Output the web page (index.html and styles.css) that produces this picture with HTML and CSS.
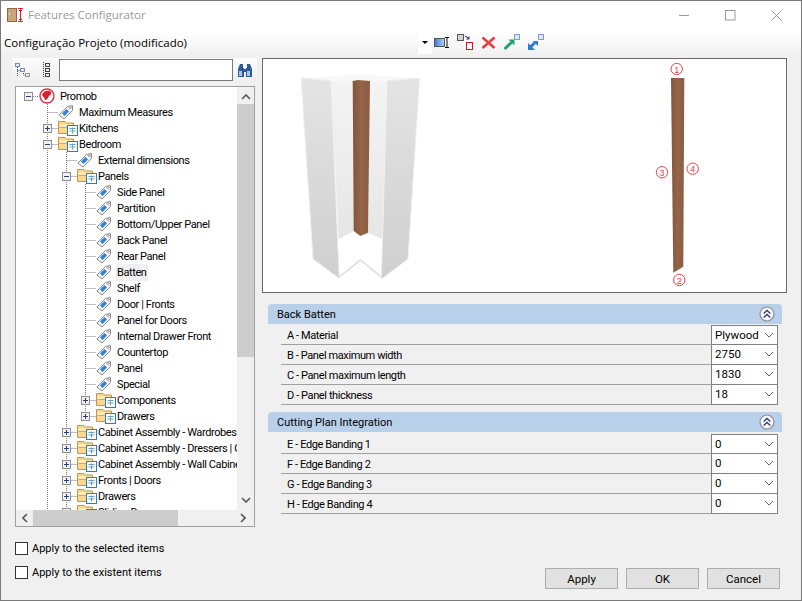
FILE: index.html
```html
<!DOCTYPE html>
<html lang="en">
<head>
<meta charset="utf-8">
<title>Features Configurator</title>
<link rel="stylesheet" href="styles.css">
</head>
<body>
<svg class="defs" width="0" height="0">
  <symbol id="tag" viewBox="0 0 16 16">
    <path d="M1 11 L9.5 2.5 L14.5 1.5 L14.5 6.5 L6 15 Z" fill="#f4f4f4" stroke="#8a8a8a"/>
    <path d="M4 9.5 L8.5 5 L11 7.5 L6.5 12 Z" fill="#2f80d8"/>
    <circle cx="12.3" cy="3.7" r="1" fill="#fff" stroke="#777" stroke-width=".7"/>
  </symbol>
  <symbol id="folder" viewBox="0 0 20 16">
    <path d="M.5 13.5 V1.5 H7 L8.5 3 H15.5 V13.5 Z" fill="#f8d98f" stroke="#c79542"/>
    <path d="M1.5 5.5 H14.5" stroke="#fff3cf" stroke-width="2"/>
    <path d="M1.5 7.5 H14.5" stroke="#d9a957"/>
    <rect x="9.5" y="5.5" width="10" height="10" fill="#fff" stroke="#1d83c4"/>
    <path d="M11.5 8.5 H17.5 M11.5 11 H17.5 M14.5 7.5 V13.5" stroke="#6f9fc0"/>
  </symbol>
  <symbol id="minus" viewBox="0 0 9 9">
    <rect x=".5" y=".5" width="8" height="8" fill="#f1f1f1" stroke="#8e8e8e"/>
    <path d="M2 4.5 H7" stroke="#27406f"/>
  </symbol>
  <symbol id="plus" viewBox="0 0 9 9">
    <rect x=".5" y=".5" width="8" height="8" fill="#f1f1f1" stroke="#8e8e8e"/>
    <path d="M2 4.5 H7 M4.5 2 V7" stroke="#27406f"/>
  </symbol>
  <symbol id="chev" viewBox="0 0 10 6">
    <path d="M1 1 L5 5 L9 1" fill="none" stroke="#606060"/>
  </symbol>
  <symbol id="collapse" viewBox="0 0 16 16">
    <circle cx="8" cy="8" r="7" fill="#f6f6f6" stroke="#8d8d8d" stroke-width="1.2"/>
    <path d="M4.7 7.5 L8 4.5 L11.3 7.5 M4.7 11.5 L8 8.5 L11.3 11.5" fill="none" stroke="#2b3f70" stroke-width="1.3"/>
  </symbol>
</svg>

<div class="window">
  <header class="titlebar">
    <svg class="app-icon" width="17" height="16" viewBox="0 0 17 16">
      <rect x=".5" y="1.5" width="9" height="13" fill="#c9a37a" stroke="#8c6a48"/>
      <rect x="2" y="6" width="1" height="2" fill="#f0e2d0"/>
      <path d="M11 1.5 H16 M13.5 1.5 V14.5 M11 14.5 H16 M12 3.5 H15 M12 12.5 H15" stroke="#e0202c" stroke-width="1.2" fill="none"/>
    </svg>
    <span class="title">Features Configurator</span>
    <div class="controls">
      <svg width="11" height="11" viewBox="0 0 11 11"><path d="M0 5.5 H10" stroke="#999"/></svg>
      <svg width="11" height="11" viewBox="0 0 11 11"><rect x=".5" y=".5" width="9.5" height="9.5" fill="none" stroke="#999"/></svg>
      <svg width="11" height="11" viewBox="0 0 11 11"><path d="M.5 .5 L10.5 10.5 M10.5 .5 L.5 10.5" stroke="#999"/></svg>
    </div>
  </header>

  <div class="projectbar">
    <span class="project-name">Configuração Projeto (modificado)</span>
    <span class="drop"><span class="drop-arrow"></span></span>
    <div class="tools">
      <svg width="16" height="16" viewBox="0 0 16 16"><defs><linearGradient id="b1" x1="0" x2="1"><stop offset="0" stop-color="#3c78dc"/><stop offset="1" stop-color="#b8d0f5"/></linearGradient></defs><rect x=".5" y="3.5" width="10" height="8" fill="url(#b1)" stroke="#555"/><path d="M11 2.5 H15 M13 2.5 V12.5 M11 12.5 H15" stroke="#111" fill="none"/></svg>
      <svg width="17" height="17" viewBox="0 0 17 17"><rect x=".5" y=".5" width="6" height="6" fill="#d6d6d6" stroke="#555"/><path d="M8 2 L12 4.5 M12 2.5 V5 H9.5" stroke="#14206e" fill="none"/><rect x="9.5" y="8.5" width="6" height="7" fill="#fff" stroke="#e01010"/></svg>
      <svg width="15" height="14" viewBox="0 0 15 14"><path d="M1.5 1.5 L13.5 12 M13.5 1.5 L1.5 12" stroke="#ee3a3a" stroke-width="2.4"/></svg>
      <svg width="17" height="17" viewBox="0 0 17 17"><path d="M1.5 15 L9.5 7.5" stroke="#24a070" stroke-width="3"/><path d="M5.5 5.5 H11.5 V11.5 Z" fill="#24a070"/><rect x="11.5" y=".5" width="5" height="5" fill="#dfe8f8" stroke="#7f9fd8"/></svg>
      <svg width="17" height="17" viewBox="0 0 17 17"><path d="M8 8.5 L2 14.5" stroke="#2f78d8" stroke-width="3"/><path d="M1 9 V16 H8 Z" fill="#2f78d8"/><path d="M6 7 L11 7 L11 12 Z" fill="#2f78d8"/><rect x="11.5" y=".5" width="5" height="5" fill="#dfe8f8" stroke="#7f9fd8"/></svg>
    </div>
  </div>

  <main class="main">
    <section class="left">
      <div class="searchbar">
        <svg class="tool-a" width="16" height="16" viewBox="0 0 16 16"><path d="M2.5 5 V15 M2.5 8.5 H6 M8.5 9 V13 H11" stroke="#444" stroke-dasharray="1 1" fill="none"/><rect x=".5" y="1.5" width="4" height="3" fill="#dfe6f2" stroke="#7a8fb0"/><rect x="5.5" y="6.5" width="4" height="3" fill="#dfe6f2" stroke="#7a8fb0"/><rect x="10.5" y="11.5" width="4" height="3" fill="#e6e6e6" stroke="#999"/></svg>
        <svg class="tool-b" width="10" height="16" viewBox="0 0 10 16"><path d="M2.5 0 V16" stroke="#444" stroke-dasharray="1 1"/><rect x="4.5" y="1.5" width="4" height="3" fill="#eee" stroke="#444"/><rect x="4.5" y="6.5" width="4" height="3" fill="#eee" stroke="#444"/><rect x="4.5" y="11.5" width="4" height="3" fill="#eee" stroke="#444"/></svg>
        <input class="search" type="text" aria-label="Search">
        <svg class="binoc" width="16" height="15" viewBox="0 0 16 15"><path d="M3 1 H6 V5 H7 V14 H1 V6 Z M9 5 H10 V1 H13 L15 6 V14 H9 Z" fill="#2f5a99"/><rect x="7" y="6" width="2" height="3" fill="#2f5a99"/><rect x="2" y="8" width="3" height="5" fill="#a9c4e8"/><rect x="10" y="8" width="3" height="5" fill="#a9c4e8"/></svg>
      </div>

      <div class="tree">
        <div class="tree-view">
          <svg class="tree-lines" width="221" height="423" viewBox="16 87 221 423">
            <path d="M47.5 104 V510 M66.5 152 V510 M85.5 184 V416
              M47.5 112.5 H58 M47.5 128.5 H58 M47.5 144.5 H58
              M66.5 160.5 H77 M66.5 176.5 H77 M66.5 432.5 H77 M66.5 448.5 H77 M66.5 464.5 H77 M66.5 480.5 H77 M66.5 496.5 H77
              M85.5 192.5 H96 M85.5 208.5 H96 M85.5 224.5 H96 M85.5 240.5 H96 M85.5 256.5 H96 M85.5 272.5 H96 M85.5 288.5 H96 M85.5 304.5 H96 M85.5 320.5 H96 M85.5 336.5 H96 M85.5 352.5 H96 M85.5 368.5 H96 M85.5 384.5 H96 M85.5 400.5 H96 M85.5 416.5 H96
              M33 96.5 H39" fill="none" stroke="#7d7d7d" stroke-dasharray="1 1"/>
          </svg>
          <ul class="rows">
            <li class="row l0"><svg class="exp"><use href="#minus"/></svg><span class="ico"><svg width="16" height="16" viewBox="0 0 16 16"><circle cx="8" cy="8" r="7" fill="#fff" stroke="#e0313c" stroke-width="1.4"/><path d="M3 7 C4 3 8 2 11 3 C13 5 12 7 10 8 C9 10 8 12 6 12 C6 10 4 9 3 7 Z" fill="#d81f2c"/></svg></span><span class="label">Promob</span></li>
            <li class="row l1"><span class="exp-none"></span><span class="ico"><svg width="16" height="16"><use href="#tag"/></svg></span><span class="label">Maximum Measures</span></li>
            <li class="row l1"><svg class="exp"><use href="#plus"/></svg><span class="ico"><svg width="20" height="16"><use href="#folder"/></svg></span><span class="label">Kitchens</span></li>
            <li class="row l1"><svg class="exp"><use href="#minus"/></svg><span class="ico"><svg width="20" height="16"><use href="#folder"/></svg></span><span class="label">Bedroom</span></li>
            <li class="row l2"><span class="exp-none"></span><span class="ico"><svg width="16" height="16"><use href="#tag"/></svg></span><span class="label">External dimensions</span></li>
            <li class="row l2"><svg class="exp"><use href="#minus"/></svg><span class="ico"><svg width="20" height="16"><use href="#folder"/></svg></span><span class="label">Panels</span></li>
            <li class="row l3"><span class="exp-none"></span><span class="ico"><svg width="16" height="16"><use href="#tag"/></svg></span><span class="label">Side Panel</span></li>
            <li class="row l3"><span class="exp-none"></span><span class="ico"><svg width="16" height="16"><use href="#tag"/></svg></span><span class="label">Partition</span></li>
            <li class="row l3"><span class="exp-none"></span><span class="ico"><svg width="16" height="16"><use href="#tag"/></svg></span><span class="label">Bottom/Upper Panel</span></li>
            <li class="row l3"><span class="exp-none"></span><span class="ico"><svg width="16" height="16"><use href="#tag"/></svg></span><span class="label">Back Panel</span></li>
            <li class="row l3"><span class="exp-none"></span><span class="ico"><svg width="16" height="16"><use href="#tag"/></svg></span><span class="label">Rear Panel</span></li>
            <li class="row l3"><span class="exp-none"></span><span class="ico"><svg width="16" height="16"><use href="#tag"/></svg></span><span class="label selected">Batten</span></li>
            <li class="row l3"><span class="exp-none"></span><span class="ico"><svg width="16" height="16"><use href="#tag"/></svg></span><span class="label">Shelf</span></li>
            <li class="row l3"><span class="exp-none"></span><span class="ico"><svg width="16" height="16"><use href="#tag"/></svg></span><span class="label">Door | Fronts</span></li>
            <li class="row l3"><span class="exp-none"></span><span class="ico"><svg width="16" height="16"><use href="#tag"/></svg></span><span class="label">Panel for Doors</span></li>
            <li class="row l3"><span class="exp-none"></span><span class="ico"><svg width="16" height="16"><use href="#tag"/></svg></span><span class="label">Internal Drawer Front</span></li>
            <li class="row l3"><span class="exp-none"></span><span class="ico"><svg width="16" height="16"><use href="#tag"/></svg></span><span class="label">Countertop</span></li>
            <li class="row l3"><span class="exp-none"></span><span class="ico"><svg width="16" height="16"><use href="#tag"/></svg></span><span class="label">Panel</span></li>
            <li class="row l3"><span class="exp-none"></span><span class="ico"><svg width="16" height="16"><use href="#tag"/></svg></span><span class="label">Special</span></li>
            <li class="row l3"><svg class="exp"><use href="#plus"/></svg><span class="ico"><svg width="20" height="16"><use href="#folder"/></svg></span><span class="label">Components</span></li>
            <li class="row l3"><svg class="exp"><use href="#plus"/></svg><span class="ico"><svg width="20" height="16"><use href="#folder"/></svg></span><span class="label">Drawers</span></li>
            <li class="row l2"><svg class="exp"><use href="#plus"/></svg><span class="ico"><svg width="20" height="16"><use href="#folder"/></svg></span><span class="label">Cabinet Assembly - Wardrobes</span></li>
            <li class="row l2"><svg class="exp"><use href="#plus"/></svg><span class="ico"><svg width="20" height="16"><use href="#folder"/></svg></span><span class="label">Cabinet Assembly - Dressers | Chests</span></li>
            <li class="row l2"><svg class="exp"><use href="#plus"/></svg><span class="ico"><svg width="20" height="16"><use href="#folder"/></svg></span><span class="label">Cabinet Assembly - Wall Cabinets</span></li>
            <li class="row l2"><svg class="exp"><use href="#plus"/></svg><span class="ico"><svg width="20" height="16"><use href="#folder"/></svg></span><span class="label">Fronts | Doors</span></li>
            <li class="row l2"><svg class="exp"><use href="#plus"/></svg><span class="ico"><svg width="20" height="16"><use href="#folder"/></svg></span><span class="label">Drawers</span></li>
            <li class="row l2"><svg class="exp"><use href="#plus"/></svg><span class="ico"><svg width="20" height="16"><use href="#folder"/></svg></span><span class="label">Sliding Doors</span></li>
          </ul>
        </div>
        <div class="vscroll">
          <svg class="arrow" width="10" height="6" viewBox="0 0 10 6"><path d="M1 5 L5 1 L9 5" fill="none" stroke="#555" stroke-width="1.6"/></svg>
          <div class="vthumb"></div>
          <svg class="arrow arrow-end" width="10" height="6" viewBox="0 0 10 6"><path d="M1 1 L5 5 L9 1" fill="none" stroke="#555" stroke-width="1.6"/></svg>
        </div>
        <div class="hscroll">
          <svg class="arrow" width="6" height="10" viewBox="0 0 6 10"><path d="M5 1 L1 5 L5 9" fill="none" stroke="#555" stroke-width="1.6"/></svg>
          <div class="hthumb"></div>
          <svg class="arrow arrow-end" width="6" height="10" viewBox="0 0 6 10"><path d="M1 1 L5 5 L1 9" fill="none" stroke="#555" stroke-width="1.6"/></svg>
        </div>
      </div>

      <label class="check"><span class="box"></span>Apply to the selected items</label>
      <label class="check"><span class="box"></span>Apply to the existent items</label>
    </section>

    <section class="right">
      <div class="preview">
        <svg class="scene" width="523" height="233" viewBox="263 59 523 233">
          <defs>
            <linearGradient id="panelL" x1="0" y1="0" x2="0" y2="1"><stop offset="0" stop-color="#e4e4e4"/><stop offset="1" stop-color="#cfcfcf"/></linearGradient>
            <linearGradient id="innerL" x1="0" y1="0" x2="0" y2="1"><stop offset="0" stop-color="#f4f4f4"/><stop offset="1" stop-color="#e6e6e6"/></linearGradient>
            <linearGradient id="wood" x1="0" y1="0" x2="1" y2="0"><stop offset="0" stop-color="#83553a"/><stop offset=".5" stop-color="#946548"/><stop offset="1" stop-color="#8a5c40"/></linearGradient>
          </defs>
          <path d="M301 78 L358.7 74.3 L419.7 78 L387 80.7 L331 80.7 Z" fill="#f8f8f8"/>
          <path class="edge" d="M301 78 L331 80.7 L339.3 278.7 L313 259 Z" fill="url(#panelL)"/>
          <path class="edge" d="M419.7 78 L387 80.7 L381.3 279.3 L408 259 Z" fill="url(#panelL)"/>
          <path d="M331 80.7 L353 80.7 L354 231 L338.7 239 Z" fill="url(#innerL)"/>
          <path d="M370 80.7 L387 80.7 L382 239 L368 232.7 Z" fill="url(#innerL)"/>
          <path d="M352.7 81 L358 80 L370 81 L368 232.7 L360.3 236 L353.7 231 Z" fill="url(#wood)"/>
          <path d="M339.3 277 L360.3 260 L381.3 277" fill="none" stroke="#dcdcdc" stroke-width="1.6"/>
          <path d="M671 78 H684.3 L683.3 266.7 L673.3 272.7 Z" fill="url(#wood)"/>
          <g class="marks">
            <circle cx="676.7" cy="69" r="5.7"/><text x="676.7" y="72.5">1</text>
            <circle cx="679.3" cy="280" r="5.7"/><text x="679.3" y="283.5">2</text>
            <circle cx="662" cy="172.3" r="5.7"/><text x="662" y="175.8">3</text>
            <circle cx="692.7" cy="168.7" r="5.7"/><text x="692.7" y="172.2">4</text>
          </g>
        </svg>
      </div>

      <div class="group group-first">
        <div class="group-head"><span>Back Batten</span><svg width="16" height="16"><use href="#collapse"/></svg></div>
        <div class="prop"><span class="prop-label">A - Material</span><div class="combo"><span>Plywood</span><svg width="10" height="6"><use href="#chev"/></svg></div></div>
        <div class="prop"><span class="prop-label">B - Panel maximum width</span><div class="combo"><span>2750</span><svg width="10" height="6"><use href="#chev"/></svg></div></div>
        <div class="prop"><span class="prop-label">C - Panel maximum length</span><div class="combo"><span>1830</span><svg width="10" height="6"><use href="#chev"/></svg></div></div>
        <div class="prop"><span class="prop-label">D - Panel thickness</span><div class="combo"><span>18</span><svg width="10" height="6"><use href="#chev"/></svg></div></div>
      </div>

      <div class="group group-second">
        <div class="group-head"><span>Cutting Plan Integration</span><svg width="16" height="16"><use href="#collapse"/></svg></div>
        <div class="prop"><span class="prop-label">E - Edge Banding 1</span><div class="combo"><span>0</span><svg width="10" height="6"><use href="#chev"/></svg></div></div>
        <div class="prop"><span class="prop-label">F - Edge Banding 2</span><div class="combo"><span>0</span><svg width="10" height="6"><use href="#chev"/></svg></div></div>
        <div class="prop"><span class="prop-label">G - Edge Banding 3</span><div class="combo"><span>0</span><svg width="10" height="6"><use href="#chev"/></svg></div></div>
        <div class="prop"><span class="prop-label">H - Edge Banding 4</span><div class="combo"><span>0</span><svg width="10" height="6"><use href="#chev"/></svg></div></div>
      </div>

      <div class="actions">
        <button class="btn" type="button">Apply</button>
        <button class="btn" type="button">OK</button>
        <button class="btn" type="button">Cancel</button>
      </div>
    </section>
  </main>
</div>
</body>
</html>
```

FILE: styles.css
```css
* { box-sizing: border-box; }
html, body { margin: 0; padding: 0; }
body {
  width: 802px;
  height: 601px;
  overflow: hidden;
  font-family: Roboto, "Noto Sans", "Liberation Sans", sans-serif;
  font-size: 11.5px;
  color: #000;
}
.defs { position: absolute; }
.window {
  width: 802px;
  height: 601px;
  border: 1px solid #7a7a7a;
  background: #f0f0f0;
  display: flex;
  flex-direction: column;
}

/* title bar */
.titlebar {
  height: 31px;
  flex: none;
  background: #fff;
  display: flex;
  align-items: center;
  padding: 0 0 3px 6px;
}
.title { margin-left: 4px; margin-top: -1px; color: #9a9a9a; font-family: "Open Sans", sans-serif; font-size: 11.5px; }
.controls {
  margin-left: auto;
  display: flex;
  gap: 35px;
  margin-right: 19px;
}

/* project bar */
.projectbar {
  height: 24px;
  flex: none;
  display: flex;
  align-items: center;
  padding: 0 0 3px 3px;
  background: linear-gradient(#ffffff, #f0f0f0);
}
.project-name { font-family: "Open Sans", sans-serif; font-size: 11.5px; width: 414px; }
.drop {
  width: 14px;
  height: 22px;
  background: #fff;
  display: flex;
  align-items: center;
  justify-content: center;
}
.drop-arrow {
  width: 0;
  height: 0;
  border-left: 3px solid transparent;
  border-right: 3px solid transparent;
  border-top: 3px solid #000;
}
.tools {
  display: flex;
  align-items: center;
  gap: 7px;
  margin-left: 2px;
}

/* main layout */
.main { flex: 1; display: flex; min-height: 0; }
.left { width: 245px; margin-left: 11px; padding-top: 2px; }
.right { width: 525px; margin-left: 5px; padding-top: 2px; display: flex; flex-direction: column; }

/* search */
.searchbar {
  height: 24px;
  display: flex;
  align-items: center;
  background: linear-gradient(#fbfbfb, #f0f0f0);
  padding-left: 3px;
}
.tool-b { margin-left: 10px; }
.search {
  margin-left: 8px;
  width: 174px;
  height: 22px;
  border: 1px solid #7a7a7a;
  background: #fff;
  padding: 0;
}
.binoc { margin-left: 4px; }

/* tree */
.tree {
  width: 240px;
  height: 441px;
  margin: 4px 0 15px 3px;
  border: 1px solid #a0a0a0;
  background: #fff;
  display: grid;
  grid-template-columns: 221px 17px;
  grid-template-rows: 423px 16px;
}
.tree-view { position: relative; overflow: hidden; grid-column: 1; grid-row: 1; }
.tree-lines { position: absolute; left: 0; top: 0; }
.rows { list-style: none; margin: 0; padding: 1px 0 0; position: relative; }
.row {
  height: 16px;
  display: flex;
  align-items: center;
  white-space: nowrap;
}
.l0 { padding-left: 8px; }
.l1 { padding-left: 27px; }
.l2 { padding-left: 46px; }
.l3 { padding-left: 65px; }
.exp { width: 9px; height: 9px; flex: none; margin-right: 6px; }
.exp-none { width: 15px; flex: none; }
.ico { width: 21px; height: 16px; flex: none; display: flex; align-items: center; }
.label, .prop-label {
  font-size: 11px;
  letter-spacing: -0.4px;
}
.label { line-height: 16px; padding-top: 1px; }
.prop-label { padding-top: 1px; }
.selected { background: #f0f0f0; padding: 1px 1px 0; margin-left: -1px; }

.vscroll, .hscroll { background: #f0f0f0; display: flex; align-items: center; }
.vscroll { flex-direction: column; grid-column: 2; grid-row: 1; padding-top: 7px; }
.hscroll { grid-column: 1 / 3; grid-row: 2; padding-left: 6px; padding-right: 8px; }
.arrow { flex: none; }
.arrow-end { margin-top: auto; }
.vscroll .arrow-end { margin-bottom: 7px; }
.hscroll .arrow-end { margin-top: 0; margin-left: auto; }
.vthumb { width: 17px; height: 253px; background: #cdcdcd; margin-top: 4px; }
.hthumb { width: 145px; height: 16px; background: #cdcdcd; margin-left: 5px; }

/* checks */
.check { display: flex; align-items: center; height: 13px; margin: 0 0 11px 3px; font-size: 11px; }
.box { width: 13px; height: 13px; border: 1px solid #333; background: #fff; margin-right: 4px; flex: none; }

/* preview */
.preview { height: 235px; flex: none; border: 1px solid #696969; background: #fff; }
.scene { display: block; }
.edge { stroke: #f0f0f0; stroke-width: 1; }
.marks circle { fill: #fff; stroke: #e2444c; stroke-width: 1; }
.marks text { fill: #e2444c; font-size: 9px; text-anchor: middle; font-family: "Liberation Sans", sans-serif; }

/* property groups */
.group { width: 514px; margin-left: 6px; flex: none; }
.group-first { margin-top: 11px; }
.group-second { margin-top: 7px; }
.group-head {
  height: 20px;
  background: #b9d0ea;
  border-radius: 4px 4px 0 0;
  display: flex;
  align-items: center;
  justify-content: space-between;
  padding: 0 7px 0 9px;
  margin-bottom: 1px;
  font-size: 11px;
}
.group-second .group-head { margin-bottom: 2px; }
.prop {
  height: 20px;
  margin: 0 4px 0 13px;
  display: flex;
  align-items: center;
  justify-content: space-between;
  padding-left: 6px;
  border-bottom: 1px solid #a0a0a0;
}
.combo {
  width: 67px;
  height: 20px;
  border: 1px solid #808080;
  border-top-width: 0;
  background: #fff;
  display: flex;
  align-items: center;
  justify-content: space-between;
  padding: 0 3px 0 3px;
}
.group-head + .prop .combo { border-top-width: 1px; }

/* buttons */
.actions {
  margin-top: auto;
  margin-bottom: 11px;
  margin-right: 7px;
  display: flex;
  justify-content: flex-end;
  gap: 8px;
}
.btn {
  width: 73px;
  height: 21px;
  background: #e1e1e1;
  border: 1px solid #adadad;
  font: inherit;
  color: #000;
  padding: 0;
}
```
